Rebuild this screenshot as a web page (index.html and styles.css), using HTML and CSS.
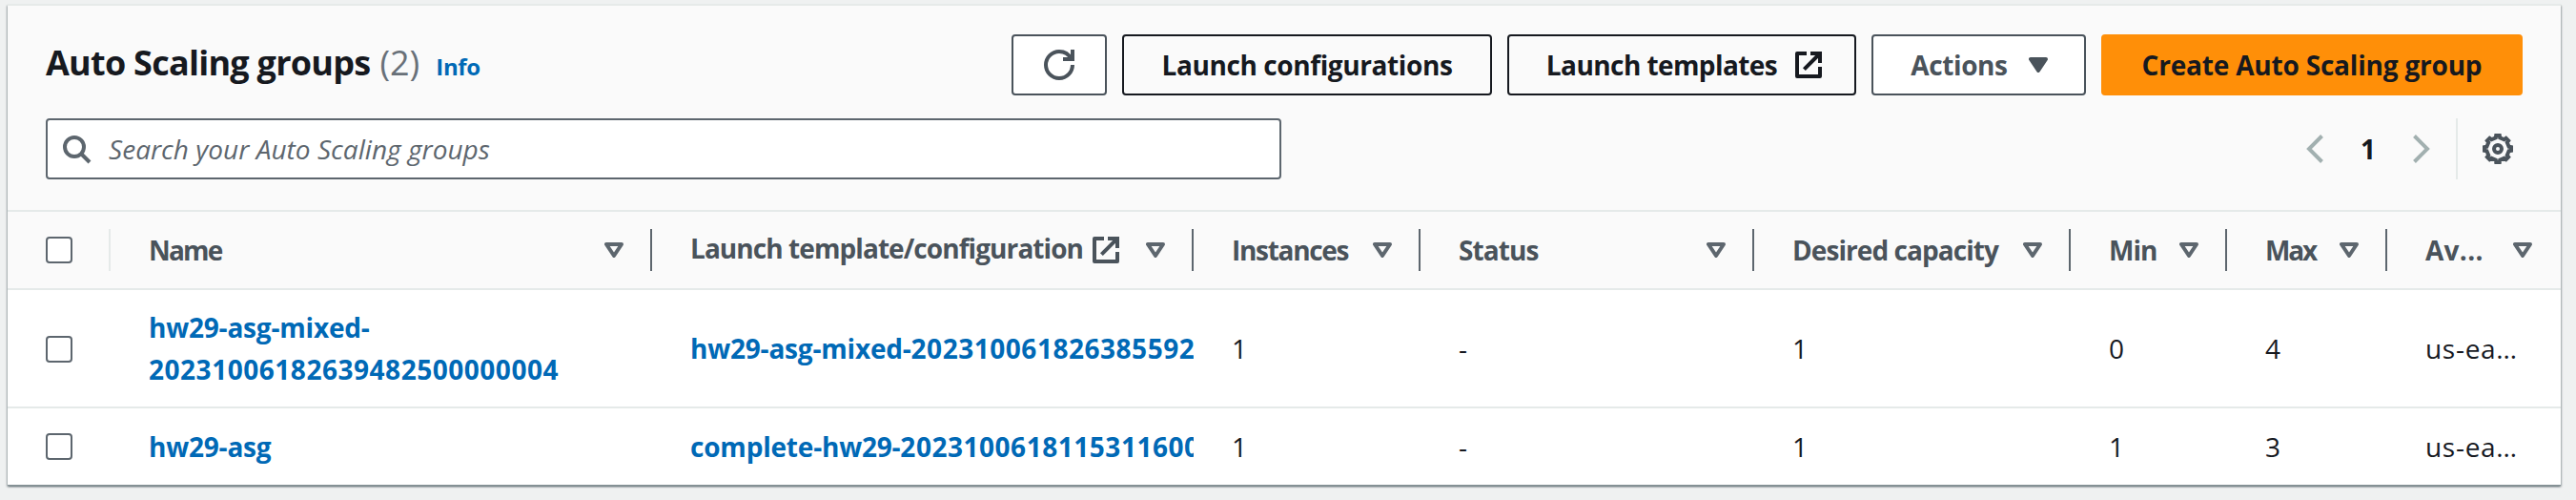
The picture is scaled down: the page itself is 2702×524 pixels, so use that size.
FILE: index.html
```html
<!DOCTYPE html>
<html lang="en">
<head>
<meta charset="utf-8">
<title>Auto Scaling groups</title>
<link rel="stylesheet" href="styles.css">
</head>
<body>
<svg class="sprite" aria-hidden="true">
  <symbol id="sort" viewBox="0 0 20 16"><path class="line-sort" d="M2 2h16l-8 12z"/></symbol>
  <symbol id="caret" viewBox="0 0 20 16"><path class="line-sort solid" d="M2 2h16l-8 12z"/></symbol>
  <symbol id="external" viewBox="0 0 16 16"><path class="line round" d="M7 2H2v12h12V9"/><path class="line" d="M9 2h5v5M5.7 10.3 14 2"/></symbol>
  <symbol id="refresh" viewBox="0 0 16 16"><path class="line" d="M15 8c0 3.87-3.13 7-7 7s-7-3.13-7-7 3.13-7 7-7c2.79 0 5.2 1.63 6.33 4M10 5h5V0"/></symbol>
  <symbol id="search" viewBox="0 0 16 16"><circle class="line" cx="7" cy="7" r="5"/><path class="line" d="M10.5 10.5 15 15"/></symbol>
  <symbol id="prev" viewBox="0 0 20 32"><path class="chevron" d="M17.5 2.500 4 16l13.500 13.500"/></symbol>
  <symbol id="next" viewBox="0 0 20 32"><path class="chevron" d="M2.500 2.500 16 16 2.500 29.500"/></symbol>
  <symbol id="gear" viewBox="-8 -8 16 16"><path class="line" d="M-.9-7H.9L1.100-5.800 3.320-4.880 4.310-5.590 5.590-4.310 4.880-3.320 5.800-1.100 7-.9V.9L5.800 1.100 4.880 3.320 5.590 4.310 4.310 5.590 3.320 4.880 1.100 5.800 .9 7H-.9L-1.100 5.800-3.320 4.880-4.310 5.590-5.590 4.310-4.880 3.320-5.800 1.100-7 .9V-.9L-5.800-1.100-4.880-3.320-5.590-4.310-4.310-5.590-3.320-4.880-1.100-5.800z"/><circle class="line" r="2"/></symbol>
</svg>

<main class="panel">
  <header class="header">
    <div class="heading-row">
      <h2 class="title"><span class="title-text">Auto Scaling groups</span><span class="count">(2)</span><a class="info">Info</a></h2>
      <div class="actions">
        <button class="btn btn-icon"><svg class="icon"><use href="#refresh"/></svg></button>
        <button class="btn btn-link btn-configs">Launch configurations</button>
        <button class="btn btn-link btn-templates"><span>Launch templates</span><svg class="icon"><use href="#external"/></svg></button>
        <button class="btn btn-menu"><span>Actions</span><svg class="sort"><use href="#caret"/></svg></button>
        <button class="btn btn-primary">Create Auto Scaling group</button>
      </div>
    </div>
    <div class="tools-row">
      <div class="search"><svg class="icon"><use href="#search"/></svg><span class="placeholder">Search your Auto Scaling groups</span></div>
      <div class="pagination">
        <svg class="page-arrow"><use href="#prev"/></svg>
        <span class="page">1</span>
        <svg class="page-arrow"><use href="#next"/></svg>
        <div class="settings"><svg class="icon"><use href="#gear"/></svg></div>
      </div>
    </div>
  </header>

  <div class="row head">
    <div class="cell select"><span class="checkbox"></span></div>
    <div class="cell"><span class="name">Name</span><svg class="sort"><use href="#sort"/></svg></div>
    <div class="cell"><span class="template">Launch template/configuration</span><svg class="icon"><use href="#external"/></svg><svg class="sort"><use href="#sort"/></svg></div>
    <div class="cell"><span class="instances">Instances</span><svg class="sort"><use href="#sort"/></svg></div>
    <div class="cell"><span>Status</span><svg class="sort"><use href="#sort"/></svg></div>
    <div class="cell"><span>Desired capacity</span><svg class="sort"><use href="#sort"/></svg></div>
    <div class="cell"><span>Min</span><svg class="sort"><use href="#sort"/></svg></div>
    <div class="cell"><span class="max">Max</span><svg class="sort"><use href="#sort"/></svg></div>
    <div class="cell"><span class="zones">Av...</span><svg class="sort"><use href="#sort"/></svg></div>
  </div>
  <div class="row first">
    <div class="cell select"><span class="checkbox"></span></div>
    <div class="cell"><a class="link">hw29-asg-mixed-<br><span class="digits">20231006182639482500000004</span></a></div>
    <div class="cell"><a class="link">hw29-asg-mixed-<span class="digits">202310061826385592</span></a></div>
    <div class="cell">1</div>
    <div class="cell">-</div>
    <div class="cell">1</div>
    <div class="cell">0</div>
    <div class="cell">4</div>
    <div class="cell zone">us-ea…</div>
  </div>
  <div class="row last">
    <div class="cell select"><span class="checkbox"></span></div>
    <div class="cell"><a class="link">hw29-asg</a></div>
    <div class="cell"><a class="link">complete-hw29-<span class="digits">2023100618115311600</span></a></div>
    <div class="cell">1</div>
    <div class="cell">-</div>
    <div class="cell">1</div>
    <div class="cell">1</div>
    <div class="cell">3</div>
    <div class="cell zone">us-ea…</div>
  </div>
</main>
</body>
</html>
```

FILE: styles.css
```css
* { box-sizing: border-box; }
html { background: #eff1f1; }
body {
  min-height: 524px;
  margin: 0;
  padding: 4px 16px 0 8px;
  color: #16191f;
  font: 28px/44px "Open Sans", "Noto Sans", sans-serif;
}
.sprite { display: none; }
.line, .line-sort, .chevron { fill: none; stroke: currentColor; stroke-width: 2; }
.round { stroke-linejoin: round; }
.line-sort { stroke-width: 4; stroke-linejoin: round; }
.solid { fill: currentColor; }
.chevron { stroke-width: 4; }
.icon { width: 32px; height: 32px; flex: none; }
.sort { width: 20px; height: 16px; flex: none; }

.panel {
  height: 504px;
  border-top: 2px solid #e6eae9;
  background: #fff;
  box-shadow: 0 1px 0 #879297, 0 2px 2px rgba(0, 28, 36, .4), 1px 2px 2px rgba(0, 28, 36, .2), -1px 2px 2px rgba(0, 28, 36, .2);
}
.header {
  height: 216px;
  padding: 30px 40px 0;
  border-bottom: 2px solid #e5eae9;
  background: #fafafa;
}
.heading-row, .tools-row { display: flex; justify-content: space-between; height: 64px; }
.tools-row { margin-top: 24px; }
.title { margin: 0; font-size: 36px; line-height: 60px; font-weight: 700; display: flex; align-items: baseline; }
.title-text { letter-spacing: -.74px; }
.count { margin-left: 10px; color: #687078; font-weight: 400; }
.info { margin-left: 17px; color: #0069b6; font-size: 24px; letter-spacing: -.3px; }

.actions { display: flex; gap: 16px; }
.btn {
  display: flex;
  align-items: center;
  justify-content: center;
  height: 64px;
  padding: 0;
  border: 2px solid #4a535b;
  border-radius: 4px;
  background: #fff;
  color: #4a535b;
  font: 700 28px/44px "Open Sans", "Noto Sans", sans-serif;
  letter-spacing: -.4px;
  white-space: nowrap;
}
.btn-icon { width: 100px; }
.btn-link { border-color: #16191f; background: transparent; color: #16191f; }
.btn-configs { width: 388px; }
.btn-templates { width: 366px; gap: 17px; padding-left: 7px; letter-spacing: -.58px; }
.btn-menu { width: 225px; gap: 22px; padding-left: 1px; }
.btn-primary { width: 442px; border-color: #ff8f08; background: #ff8f08; color: #16191f; letter-spacing: -.2px; }

.search {
  display: flex;
  align-items: center;
  width: 1296px;
  padding-left: 14px;
  border: 2px solid #5d666e;
  border-radius: 4px;
  background: #fff;
  color: #5d666e;
}
.placeholder { margin-left: 18px; font-style: italic; letter-spacing: .04px; }
.pagination { display: flex; align-items: center; color: #4a535b; }
.page-arrow { width: 20px; height: 32px; color: #a2b0b0; }
.page { width: 92px; text-align: center; font-weight: 700; color: #16191f; }
.settings { display: flex; align-items: center; height: 64px; margin-left: 26px; padding: 0 10px 0 26px; border-left: 2px solid #e5eae9; }

.row { display: grid; grid-template-columns: 108px 568px 568px 238px 350px 332px 164px 168px 182px; }
.head { height: 82px; border-bottom: 2px solid #e5eae9; background: #fafafa; color: #4a535b; font-weight: 700; letter-spacing: -.93px; }
.first { height: 124px; border-bottom: 2px solid #e5eae9; }
.last { height: 80px; }
.cell { display: flex; align-items: center; min-width: 0; padding-left: 40px; overflow: hidden; white-space: nowrap; }
.head .cell { height: 44px; margin: 18px 0; padding-right: 28px; border-right: 2px solid #5d666e; }
.head .cell:last-child { padding-right: 30px; border-right: 0; }
.head .cell.select { border-right-color: #e5eae9; }
.head .sort { margin-left: auto; color: #5d666e; }
.checkbox { width: 28px; height: 28px; border: 2px solid #5d666e; border-radius: 4px; background: #fff; }
.first .checkbox { margin-top: 2px; }
.name { letter-spacing: -1.8px; }
.template { margin: -4px 8px 0 0; }
.instances { letter-spacing: -1.3px; }
.max { letter-spacing: -2.2px; }
.zones { letter-spacing: .3px; }
.zone { letter-spacing: .7px; }
.link { color: #0069b6; font-weight: 700; letter-spacing: -.2px; }
.digits { letter-spacing: .53px; }
```
